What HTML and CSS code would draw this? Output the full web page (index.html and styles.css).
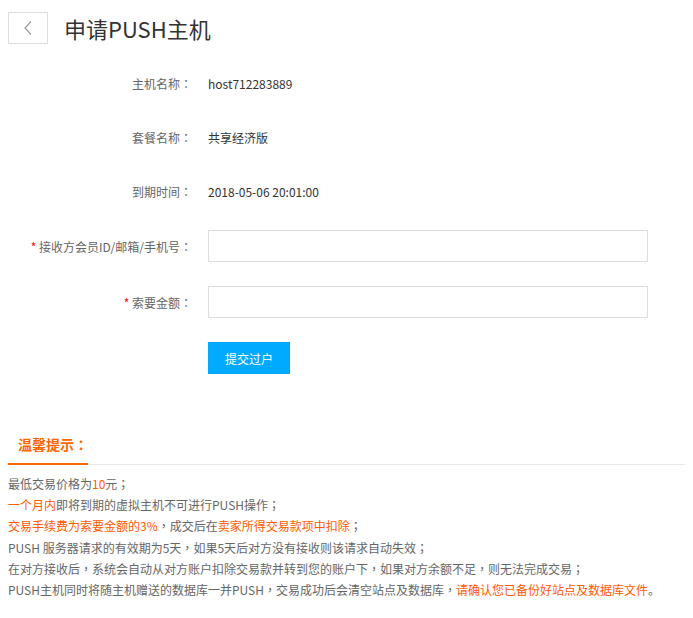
FILE: index.html
```html
<!DOCTYPE html>
<html lang="zh-CN">
<head>
<meta charset="utf-8">
<title>申请PUSH主机</title>
<link rel="stylesheet" href="styles.css">
</head>
<body>
<div class="header">
  <a class="back" href="#"><svg width="12" height="16" viewBox="0 0 12 16"><path d="M9 1.5 L3 8 L9 14.5" fill="none" stroke="#999" stroke-width="1.2"/></svg></a>
  <h1 class="title">申请PUSH主机</h1>
</div>
<div class="form">
  <div class="row"><div class="label">主机名称<span class="pu" lang="zh-TW">：</span></div><div class="value">host712283889</div></div>
  <div class="row"><div class="label">套餐名称<span class="pu" lang="zh-TW">：</span></div><div class="value">共享经济版</div></div>
  <div class="row"><div class="label">到期时间<span class="pu" lang="zh-TW">：</span></div><div class="value">2018-05-06 20:01:00</div></div>
  <div class="row field"><div class="label"><span class="req">*</span> 接收方会员ID/邮箱/手机号<span class="pu" lang="zh-TW">：</span></div><div class="value"><input class="input" type="text"></div></div>
  <div class="row field"><div class="label"><span class="req">*</span> 索要金额<span class="pu" lang="zh-TW">：</span></div><div class="value"><input class="input" type="text"></div></div>
  <div class="row field"><div class="label"></div><div class="value"><button class="btn">提交过户</button></div></div>
</div>
<div class="tips">
  <div class="tabs"><div class="tab">温馨提示<span class="pu" lang="zh-TW">：</span></div></div>
  <div class="tip-body">
    <p>最低交易价格为<span class="hl">10</span>元<span class="pu" lang="zh-TW">；</span></p>
    <p><span class="hl">一个月内</span>即将到期的虚拟主机不可进行PUSH操作<span class="pu" lang="zh-TW">；</span></p>
    <p><span class="hl">交易手续费为索要金额的3%</span><span class="pu" lang="zh-TW">，</span>成交后在<span class="hl">卖家所得交易款项中扣除</span><span class="pu" lang="zh-TW">；</span></p>
    <p>PUSH 服务器请求的有效期为5天<span class="pu" lang="zh-TW">，</span>如果5天后对方没有接收则该请求自动失效<span class="pu" lang="zh-TW">；</span></p>
    <p>在对方接收后<span class="pu" lang="zh-TW">，</span>系统会自动从对方账户扣除交易款并转到您的账户下<span class="pu" lang="zh-TW">，</span>如果对方余额不足<span class="pu" lang="zh-TW">，</span>则无法完成交易<span class="pu" lang="zh-TW">；</span></p>
    <p>PUSH主机同时将随主机赠送的数据库一并PUSH<span class="pu" lang="zh-TW">，</span>交易成功后会清空站点及数据库<span class="pu" lang="zh-TW">，</span><span class="hl">请确认您已备份好站点及数据库文件</span>。</p>
  </div>
</div>
</body>
</html>
```
FILE: styles.css
```css
* { box-sizing: border-box; }
body {
  margin: 8px;
  font-family: "Noto Sans CJK SC", "Noto Sans", sans-serif;
  font-size: 12px;
  color: #666;
  background: #fff;
}
.pu { font-family: "Noto Sans CJK TC", "Noto Sans CJK SC", sans-serif; }
.header {
  display: flex;
  align-items: center;
  padding-top: 4px;
}
.back {
  width: 40px;
  height: 32px;
  border: 1px solid #ddd;
  display: flex;
  align-items: center;
  justify-content: center;
}
.title {
  margin: 0 0 0 16px;
  font-size: 22px;
  font-weight: normal;
  color: #333;
  line-height: 32px;
}
.form {
  margin-top: 23px;
  display: flex;
  flex-direction: column;
  gap: 22px;
}
.row {
  display: flex;
  align-items: center;
  height: 32px;
}
.row.field { margin-top: 1px; }
.row.field + .row.field { margin-top: 2px; }
.label {
  width: 184px;
  text-align: right;
  color: #666;
  flex: none;
}
.req { color: #f00; }
.value {
  margin-left: 16px;
  color: #333;
}
.input {
  width: 440px;
  height: 32px;
  border: 1px solid #ddd;
  outline: none;
  padding: 0 8px;
  font: inherit;
}
.btn {
  width: 82px;
  height: 32px;
  background: #00aaff;
  border: 1px solid #0aa4f0;
  color: #fff;
  font: inherit;
  font-size: 12px;
  padding: 0;
}
.tips { margin-top: 51px; }
.tabs {
  border-bottom: 1px solid #e8e8e8;
  display: flex;
  margin-right: -8px;
}
.tab {
  width: 80px;
  height: 40px;
  line-height: 38px;
  padding-left: 10px;
  font-size: 14px;
  font-weight: bold;
  color: #f60;
  border-bottom: 2px solid #f60;
  margin-bottom: -1px;
}
.tip-body { padding-top: 8px; }
.tip-body p {
  margin: 0;
  line-height: 21.2px;
  color: #666;
  white-space: nowrap;
}
.hl { color: #ff5a00; }
```
